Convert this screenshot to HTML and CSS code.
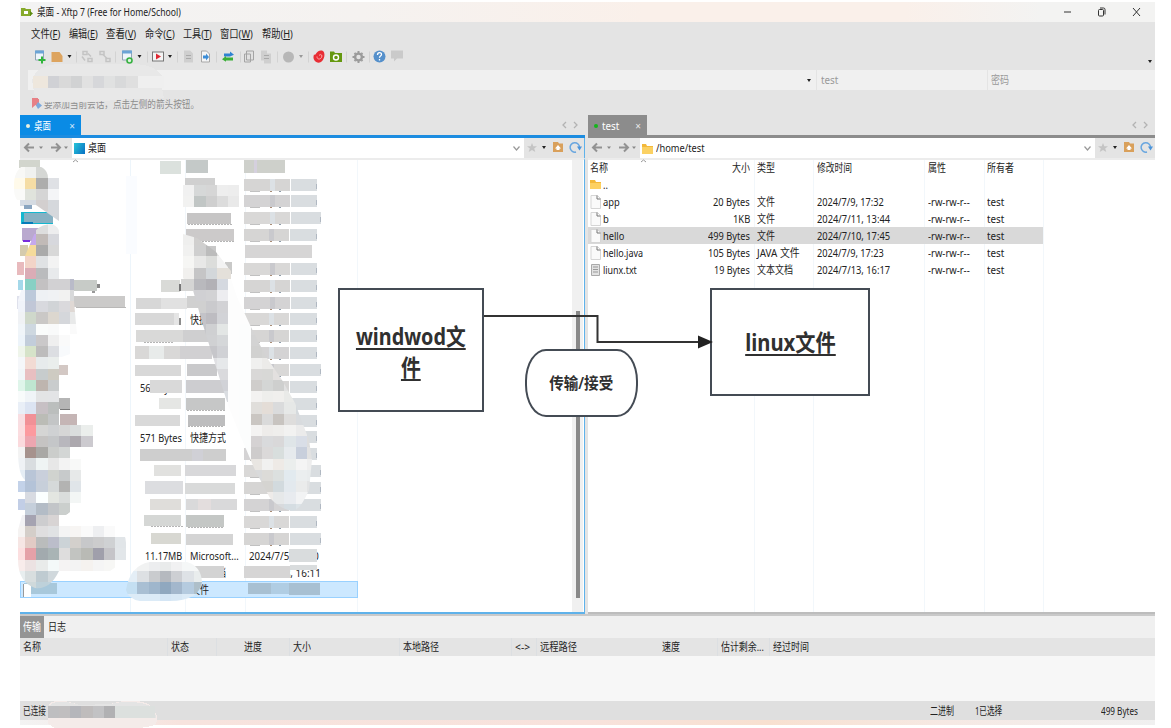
FILE: index.html
```html
<!DOCTYPE html>
<html lang="zh-CN">
<head>
<meta charset="utf-8">
<title>桌面 - Xftp 7</title>
<link rel="stylesheet" href="styles.css">
</head>
<body>
<main class="window">
  <header class="title">
    <svg class="logo" width="12" height="10" viewBox="0 0 12 10"><path fill="#86aa2c" d="M0 1h4l1 1h5v7H0z"/><path fill="#fff" d="M3 4h4v3H3z"/><path fill="#5b8a10" d="M9 4l3 2.500-3 2.500z"/></svg>
    <span class="fit" data-w="144">桌面 - Xftp 7 (Free for Home/School)</span>
    <span class="grow"></span>
    <svg width="80" height="14" viewBox="0 0 80 14" fill="none" stroke="#333" stroke-width="1"><path d="M1 7h7" /><rect x="35.500" y="4.500" width="5" height="6.500" rx="1"/><path d="M37 3h3.500q1.500 0 1.500 1.500v5"/><path d="M70 3l7 8M77 3l-7 8"/></svg>
  </header>
  <nav class="menu">
    <span class="fit" data-w="29">文件(<u>F</u>)</span><span class="fit" data-w="29">编辑(<u>E</u>)</span><span class="fit" data-w="30">查看(<u>V</u>)</span><span class="fit" data-w="30">命令(<u>C</u>)</span><span class="fit" data-w="29">工具(<u>T</u>)</span><span class="fit" data-w="33">窗口(<u>W</u>)</span><span class="fit" data-w="31">帮助(<u>H</u>)</span>
  </nav>
  <div class="toolbar">
    <svg width="400" height="24" viewBox="20 45.500 400 24">
      <g fill="#edf5fb" stroke="#90a4b5"><path d="M35.500 50.500h8v9h-8zM122.500 50.500h9v9h-9z"/></g>
      <path fill="#6ba4d6" d="M35 50h9v3h-9zM122 50h10v3h-10z"/>
      <path d="M42 56v7M38.500 59.500h7" stroke="#31b53c" stroke-width="2"/>
      <path fill="#dda45f" d="M51.500 51.500h8l3 4v6h-11z"/>
      <g fill="#222"><path d="M67.500 54.500h4l-2 3zM137.500 54.500h4l-2 3zM168 54.500h4l-2 3z"/></g><path fill="#999" d="M299 54.500h4l-2 3z"/>
      <path d="M76.500 51v11M115.500 51v11M147.500 51v11M177.500 51v11M216.500 51v11M240.500 51v11M277.500 51v11M308.500 51v11M346.500 51v11M369.500 51v11" stroke="#d3d3d3"/>
      <g stroke="#c4c4c4" fill="none" stroke-width="1.500"><rect x="83" y="51" width="4" height="3"/><rect x="88" y="58" width="4" height="3"/><path d="M82 56l3 4M88 53l3 3"/><rect x="100" y="51" width="4" height="3"/><rect x="106" y="58" width="4" height="3"/><path d="M103 54l4 4"/></g>
      <circle cx="129.500" cy="60" r="2.500" fill="#dff3df" stroke="#37b142" stroke-width="1.600"/>
      <rect x="152.500" y="51.500" width="11" height="9" fill="#f4f4f4" stroke="#777"/><path fill="#df2832" d="M156 53l5 3-5 3z"/>
      <path fill="#cfcfcf" d="M184 50h6l3 3v9h-9zM261 50h6v3h4v10h-7v-3h-3z"/><path stroke="#aaa" d="M186 55h5M186 58h5M264 55h5M264 58h5"/>
      <path fill="#f5f5f5" stroke="#a7a7a7" d="M201.500 50.500h5l3 3v8h-8z"/><path fill="#3c8dd7" d="M203 55h3v-2l3 3.500-3 3.500v-2h-3z"/>
      <path fill="#2f83d1" d="M224 53h6v-2l4 3.200-4 1.800h-6z"/><path fill="#3baf37" d="M233 57h-7v-1.500l-4 3.200 4 2.500V60h7z"/>
      <path fill="#e1e1e1" stroke="#a4a4a4" d="M246.500 50.500h7v9h-7zM244.500 53.500h6v8h-6z"/>
      <circle cx="288.500" cy="56.500" r="5.500" fill="#b7b7b7"/>
      <path fill="#e82e35" d="M314 54c2 2 2-5 8-4 4 1 3 10-2 12-4 1-8-3-6-8z"/><path d="M317 56c0 4 5 3 5-1q-2-2-3 0" fill="none" stroke="#ffaaaa"/>
      <path fill="#65980f" d="M330 51h4l1 1.500h7v9h-12z"/><circle cx="336" cy="57" r="2.500" fill="#65980f" stroke="#fff" stroke-width="1.400"/>
      <circle cx="358.500" cy="56.500" r="3.400" fill="none" stroke="#9b9b9b" stroke-width="2.400"/><path d="M358.500 50.500v2M358.500 60.500v2M352.500 56.500h2M362.500 56.500h2M354.500 52.500l1 1M361.500 59.500l1 1M354.500 60.500l1-1M361.500 53.500l1-1" stroke="#9b9b9b" stroke-width="2"/>
      <circle cx="379.500" cy="56" r="6" fill="#5590cb"/><path d="M377.500 54.500c0-3 4-3 4-.5 0 1.500-2 1.500-2 3.200M379.500 58.500v1.500" stroke="#fff" fill="none" stroke-width="1.300"/>
      <path fill="#cacaca" d="M391 50h12v8h-6l-3 3v-3h-3z"/>
    </svg>
    <span class="grow"></span><i class="caret"></i>
  </div>
  <div class="address"><div class="host"><i class="caret"></i></div><div class="user"><span class="fit" data-w="17">test</span></div><div class="pass"><span class="fit" data-w="18">密码</span></div></div>
  <div class="hint"><svg width="11" height="11" viewBox="0 0 11 11"><path fill="#e78086" d="M1 0h7v10L4.500 7 1 10z"/><path fill="#7da9dc" d="M7 4l4 3.500-4 3.500-2-3.500z"/></svg><span class="fit" data-w="155">要添加当前会话，点击左侧的箭头按钮。</span></div>

  <section class="panes">
    <div class="pane left">
      <div class="tabs"><div class="tab"><i class="dot"></i><span class="fit" data-w="17">桌面</span><b>×</b></div><svg class="pager" width="16" height="8" viewBox="0 0 16 8"><path d="M4 1L1 4l3 3M12 1l3 3-3 3" /></svg></div>
      <div class="path">
        <svg class="arrows" width="52" height="19" viewBox="0 0 52 19"><path d="M14 9.500H5M9 5.500l-4 4 4 4M31 9.500h9M36 5.500l4 4-4 4"/><path class="tri" d="M19 8.500h4l-2 2.500zM44 8.500h4l-2 2.500z"/></svg>
        <div class="field"><i class="desk"></i><span class="fit" data-w="18">桌面</span><svg class="chev" width="7" height="5" viewBox="0 0 7 5"><path d="M.5.5l3 3.500 3-3.500"/></svg></div>
        <svg class="acts" width="60" height="19" viewBox="0 0 60 19"><path fill="#c4c4c4" d="M8 5l1.300 3.200H13l-2.800 2.200L11.300 14 8 11.900 4.700 14l1.100-3.600L3 8.200h3.700z"/><path fill="#222" d="M18 8h4l-2 3z"/><path fill="#d9a05b" d="M29 4h5l1 1.500h4V14H29z"/><path fill="#fff" d="M34 7l3 3.500h-1.500V12h-3v-1.500H31z"/><path d="M55.500 9.500a4.700 4.700 0 1 0-3.500 4.500" stroke="#69a6df" fill="none" stroke-width="1.500"/><path fill="#4a93da" d="M53 8.500h5l-2.500 4z"/></svg>
      </div>
      <div class="list left-list" id="left"></div>
    </div>
    <div class="pane right">
      <div class="tabs"><div class="tab"><i class="dot"></i><span class="fit" data-w="17">test</span><b>×</b></div><svg class="pager" width="16" height="8" viewBox="0 0 16 8"><path d="M4 1L1 4l3 3M12 1l3 3-3 3" /></svg></div>
      <div class="path">
        <svg class="arrows" width="52" height="19" viewBox="0 0 52 19"><path d="M14 9.500H5M9 5.500l-4 4 4 4M31 9.500h9M36 5.500l4 4-4 4"/><path class="tri" d="M19 8.500h4l-2 2.500zM44 8.500h4l-2 2.500z"/></svg>
        <div class="field"><svg width="11" height="11" viewBox="0 0 11 11"><path fill="#f3b93b" d="M0 1h4l1 2h6v8H0z"/><path fill="#fbd163" d="M0 4h11v7H0z"/></svg><span class="fit" data-w="49">/home/test</span><svg class="chev" width="7" height="5" viewBox="0 0 7 5"><path d="M.5.5l3 3.500 3-3.500"/></svg></div>
        <svg class="acts" width="60" height="19" viewBox="0 0 60 19"><path fill="#c4c4c4" d="M8 5l1.300 3.200H13l-2.800 2.200L11.300 14 8 11.900 4.700 14l1.100-3.600L3 8.200h3.700z"/><path fill="#222" d="M18 8h4l-2 3z"/><path fill="#d9a05b" d="M29 4h5l1 1.500h4V14H29z"/><path fill="#fff" d="M34 7l3 3.500h-1.500V12h-3v-1.500H31z"/><path d="M55.500 9.500a4.700 4.700 0 1 0-3.500 4.500" stroke="#69a6df" fill="none" stroke-width="1.500"/><path fill="#4a93da" d="M53 8.500h5l-2.500 4z"/></svg>
      </div>
      <div class="list right-list" id="right"></div>
    </div>
  </section>

  <div class="logtabs"><div class="on"><span class="fit" data-w="18">传输</span></div><span class="fit" data-w="18">日志</span></div>
  <div class="loghead">
    <div><span class="fit" data-w="18">名称</span></div><div><span class="fit" data-w="18">状态</span></div><div class="end"><span class="fit" data-w="18">进度</span></div><div><span class="fit" data-w="18">大小</span></div><div><span class="fit" data-w="36">本地路径</span></div><div><span class="fit" data-w="15">&lt;-&gt;</span></div><div><span class="fit" data-w="37">远程路径</span></div><div><span class="fit" data-w="18">速度</span></div><div><span class="fit" data-w="43">估计剩余...</span></div><div><span class="fit" data-w="36">经过时间</span></div>
  </div>
  <div class="logbody"></div>
  <footer class="status"><span class="fit" data-w="23">已连接</span><span class="grow"></span><div class="mode"><span class="fit" data-w="24">二进制</span></div><div class="sel"><span class="fit" data-w="27">1已选择</span></div><span class="fit" data-w="37">499 Bytes</span></footer>
  <div class="strip"></div>
</main>

<svg class="overlay" id="mosaic" width="1171" height="728" viewBox="0 0 1171 728" aria-hidden="true">
  <defs>
    <clipPath id="c-names"><path d="M14 183Q15 167 28 164Q48 165 48 178H59V221L36 205H25Q14 202 14 189ZM36 230Q42 224 52 224Q59 227 59 232V279H74V301L76 324L77 334H70V354L59 358V414H81V425H93V448H70V459H81V504L66 515H59V526H115Q126 532 126 543V560L110 571H59Q50 590 35 588Q18 582 18 560V530L25 504V480Q18 475 18 450V300L25 279V256Z"/></clipPath>
    <clipPath id="c-swoosh"><path d="M183 234L197 238 216 252 231 271V279L237 297 250 325 265 355 282 380 295 403 309 440 312 460 309 490Q300 511 292 511Q280 509 270 498L255 470 240 435 228 405 217 370 203 325 192 287 183 278Z"/></clipPath>
    <clipPath id="c-foot"><path d="M126 590Q130 565 150 562H187Q201 566 202 582Q199 601 170 601H140Q128 599 126 590Z"/></clipPath>
  </defs>
</svg>

<div class="shape box-a"><span><u>windwod文<br>件</u></span></div>
<div class="shape box-b"><span><u>linux文件</u></span></div>
<svg class="overlay" width="1171" height="728" viewBox="0 0 1171 728"><path d="M484 316H597.500V342H700" fill="none" stroke="#333" stroke-width="2"/><path d="M698 335.500L713 342l-15 6.500z" fill="#222"/><path d="M73 162l2.500-2 2.500 2M641 162l2.500-2 2.500 2" fill="none" stroke="#999"/></svg>
<div class="shape pill"><span>传输/接受</span></div>
<script src="app.js"></script>
</body>
</html>
```
FILE: styles.css
```css
* { box-sizing: border-box; }
body { margin: 0; width: 1171px; height: 728px; overflow: hidden; position: relative; background: #fff; color: #222; font: 11px/14px "Noto Sans", "Noto Sans CJK SC", sans-serif; }
svg { display: block; flex: none; }
.fit { display: inline-block; flex: none; white-space: nowrap; transform-origin: 0 50%; }
.grow { flex: 1; }
.caret { border: 2px solid transparent; border-top: 3px solid #222; border-bottom: 0; }

.window { display: flex; flex-direction: column; width: 1135px; height: 728px; margin-left: 20px; padding-top: 2px; }
.title { display: flex; align-items: center; height: 20px; padding-right: 12px; background: linear-gradient(90deg, #f3f3f3 0, #f5f2f0 30%, #faf0ea 55%, #faf0ea 78%, #f3f3f2 90%); font-size: 11px; }
.logo { margin: 0 4px 0 1px; }
.menu { display: flex; gap: 8.5px; align-items: center; height: 23px; padding-left: 11px; background: #e4e4e4; }
.menu u { text-underline-offset: 1px; }
.toolbar { display: flex; align-items: center; height: 25px; padding-right: 3px; background: #e4e4e4; }
.toolbar .caret { margin-top: 8px; }
.address { display: flex; height: 20px; padding-left: 8px; background: #e4e4e4; color: #999; }
.address > div { display: flex; align-items: center; background: #f0f0f0; }
.host { width: 788px; justify-content: flex-end; padding-right: 5px; }
.user { width: 171px; padding-left: 4px; border-left: 1px solid #e4e4e4; }
.pass { flex: 1; padding-left: 3px; border-left: 1px solid #e4e4e4; }
.hint { display: flex; align-items: center; height: 25px; padding: 2px 0 0 11px; gap: 2px; background: #e4e4e4; color: #8d8d8d; font-size: 10.5px; }

.panes { display: flex; height: 499px; background: #e4e4e4; gap: 3px; }
.pane { display: flex; flex-direction: column; }
.left { width: 565px; --accent: #1c8ce0; --edge: #5fb2ea; }
.right { flex: 1; --accent: #8c8c8c; --edge: #bdbdbd; }
.tabs { display: flex; height: 23px; justify-content: space-between; align-items: center; border-bottom: 3px solid var(--accent); padding-right: 7px; }
.tab { display: flex; align-items: center; height: 20px; width: 61px; padding: 2px 6px 0 6px; background: #0a8be5; color: #fff; }
.right .tab { width: 59px; background: #8c8c8c; }
.tab b { margin-left: auto; font: 10px "Noto Sans"; opacity: .8; }
.dot { width: 4px; height: 4px; margin-right: 4px; border-radius: 50%; background: #e9f0e0; }
.right .dot { background: #14b61a; }
.pager { fill: none; stroke: #b3b3b3; stroke-width: 1.3; }
.path { display: flex; height: 20px; border-right: 1px solid var(--edge); }
.right .path, .right .list { border-right: 0; }
.arrows { fill: none; stroke: #929292; stroke-width: 2; }
.arrows .tri { fill: #888; stroke: none; }
.field { flex: 1; display: flex; align-items: center; padding: 0 4px 0 2px; gap: 3px; background: #fff; }
.desk { width: 11px; height: 11px; background: linear-gradient(120deg, #27c5d8, #0870c4); }
.chev { margin-left: auto; fill: none; stroke: #999; stroke-width: 1.2; }
.list { flex: 1; position: relative; background: #fff; border-top: 2px solid #ececec; border-bottom: 2px solid var(--edge); border-right: 1px solid var(--edge); overflow: hidden; }
.left-list { background: linear-gradient(#edf5fb, #edf5fb) 110px 0/1px 100% no-repeat, linear-gradient(#f2f7fb, #f2f7fb) 165px 0/1px 100% no-repeat, linear-gradient(#f2f7fb, #f2f7fb) 225px 0/1px 100% no-repeat, linear-gradient(#f2f7fb, #f2f7fb) 337px 0/1px 100% no-repeat, linear-gradient(#f0f0f0, #f0f0f0) 552px 0/11px 100% no-repeat, #fff; }
.left-list::after { content: ""; position: absolute; left: 556px; top: 151px; width: 4px; height: 287px; background: #898989; }
.right-list { background: linear-gradient(#f2f7fb, #f2f7fb) 166px 0/1px 100% no-repeat, linear-gradient(#f2f7fb, #f2f7fb) 225px 0/1px 100% no-repeat, linear-gradient(#f2f7fb, #f2f7fb) 336px 0/1px 100% no-repeat, linear-gradient(#f2f7fb, #f2f7fb) 396px 0/1px 100% no-repeat, linear-gradient(#f2f7fb, #f2f7fb) 455px 0/1px 100% no-repeat, #fff; }
.row { display: grid; height: 16.86px; align-items: center; }
.row > div { display: flex; align-items: center; }
.row .num { justify-content: flex-end; }
.right-list .row { grid-template-columns: 162px 7px 60px 111px 59px 56px; width: 455px; }
.right-list .row > div:first-child { padding-left: 2px; gap: 2px; }
.left-list .row { grid-template-columns: 162px 8px 59px 108px; width: 338px; }
.right-list .selected { background: #d9d9d9; }
.left-list .selected { background: #cce8ff; border: 1px solid #99d1ff; }

.logtabs { display: flex; align-items: center; gap: 4px; height: 24px; border-top: 2px solid #c9c9c9; background: #f0f0f0; }
.logtabs .on { display: flex; align-items: center; height: 22px; padding: 0 3px; background: #949494; color: #fff; }
.loghead { display: grid; grid-template-columns: 147px 49px 73px 110px 112px 25px 123px 58px 52px 1fr; height: 18px; background: #e4e4e4; }
.loghead > div { display: flex; align-items: center; padding-left: 3px; border-left: 1px solid #dcdfe2; }
.loghead > div:nth-child(1), .loghead > div:nth-child(8) { border-left: 0; }
.loghead > .end { padding-left: 27px; }
.logbody { height: 45px; background: #f7f7f7; }
.status { display: flex; align-items: center; height: 19px; padding: 0 17px 0 3px; background: #dfdfdf; }
.mode { width: 45px; }
.sel { width: 126px; }
.strip { height: 5px; background: linear-gradient(90deg, #f3f3f3, #f7e3de 14%, #f8e2dc 50%, #f8e0d0 66%, #f6e9e4 82%, #f0f0f0); }

.overlay { position: absolute; left: 0; top: 0; }
.shape { position: absolute; display: flex; align-items: center; justify-content: center; text-align: center; border: 2px solid #444b54; background: #fff; color: #303030; font-weight: 700; }
.shape span { display: block; flex: none; white-space: nowrap; }
.shape u { text-decoration-thickness: 2px; text-underline-offset: 3px; }
.box-a { left: 338px; top: 288px; width: 146px; height: 124px; font-size: 23px; line-height: 31px; }
.box-a span { transform: translateY(2px) scaleX(.86); }
.box-b { left: 710px; top: 288px; width: 160px; height: 108px; font-size: 23px; line-height: 31px; }
.box-b span { transform: scaleX(.88); }
.pill { left: 525px; top: 349px; width: 113px; height: 68px; border-radius: 21px / 32px; font-size: 16px; font-weight: 600; }
.pill span { transform: scaleX(.91); }
```
FILE: app.js
```js
const text = (value, width) => value ? `<span class="fit" data-w="${width}">${value}</span>` : '';

// Remote directory
const page = '<svg width="11" height="14" viewBox="0 0 11 14"><path d="M1 .5h6.500l3 3v10H1z" fill="#fafafa" stroke="#d5d5d5"/><path d="M7 .5v3.500h3.500" fill="none" stroke="#777"/></svg>';
const doc = '<svg width="11" height="14" viewBox="0 0 11 14"><path d="M1.500 1.500h8v11h-8z" fill="#e2e2e2" stroke="#aaa"/><path d="M3 4h5M3 6.500h5M3 9h5" stroke="#999"/></svg>';
const folder = '<svg width="11" height="10" viewBox="0 0 11 10"><path d="M0 0h5l1 2h5v7H0z" fill="#f3b93b"/><path d="M0 3h11v6H0z" fill="#fdd162"/></svg>';
const remote = [
  ['', '名称', 18, '大小', 18, '类型', 18, '修改时间', 35, '属性', 18, '所有者', 27],
  [folder, '..', 5],
  [page, 'app', 17, '20 Bytes', 37, '文件', 18, '2024/7/9, 17:32', 67, '-rw-rw-r--', 42, 'test', 17],
  [page, 'b', 6, '1KB', 17, '文件', 18, '2024/7/11, 13:44', 73, '-rw-rw-r--', 42, 'test', 17],
  [page, 'hello', 21, '499 Bytes', 42, '文件', 18, '2024/7/10, 17:45', 73, '-rw-rw-r--', 42, 'test', 17],
  [page, 'hello.java', 40, '105 Bytes', 42, 'JAVA 文件', 43, '2024/7/9, 17:23', 67, '-rw-rw-r--', 42, 'test', 17],
  [doc, 'liunx.txt', 34, '19 Bytes', 36, '文本文档', 36, '2024/7/13, 16:17', 73, '-rw-rw-r--', 42, 'test', 17]
];
document.getElementById('right').innerHTML = remote.map((r, i) => {
  const cells = [0, 1, 2, 3].map(c => `<div>${text(r[5 + c * 2], r[6 + c * 2])}</div>`).join('');
  return `<div class="row${i === 4 ? ' selected' : ''}"><div>${r[0]}${text(r[1], r[2])}<span class="grow"></span>${text(r[3], r[4])}</div><div></div>${cells}</div>`;
}).join('');

// Local directory
const local = {
  9: ['', 0, '快捷方式', 36, '', 0],
  13: ['566 Bytes', 42, '', 0, '', 0],
  16: ['571 Bytes', 42, '快捷方式', 36, '', 0],
  23: ['11.17MB', 37, 'Microsoft...', 49, '2024/7/5, 15:20', 70],
  24: ['', 0, '文本文档', 36, '2024/7/8, 16:11', 72],
  25: ['', 0, '文件', 18, '', 0]
};
document.getElementById('left').innerHTML = Array.from({ length: 26 }, (_, i) => {
  const r = local[i] || ['', 0, '', 0, '', 0];
  return `<div class="row${i === 25 ? ' selected' : ''}"><div class="num">${text(r[0], r[1])}</div><div></div><div>${text(r[2], r[3])}</div><div>${text(r[4], r[5])}</div></div>`;
}).join('');

// Squeeze each label to its column width
document.querySelectorAll('.fit').forEach(el => {
  const natural = el.offsetWidth, width = +el.dataset.w;
  el.style.transform = `scaleX(${width / natural})`;
  el.style.marginRight = `${width - natural}px`;
});

// Redaction blocks
const svg = document.getElementById('mosaic');
const group = clip => {
  const g = document.createElementNS('http://www.w3.org/2000/svg', 'g');
  g.setAttribute('shape-rendering', 'crispEdges');
  if (clip) g.setAttribute('clip-path', `url(#${clip})`);
  svg.append(g);
  return g;
};
const draw = (g, items) => { g.innerHTML += items.map(([x, y, w, h, c]) => `<rect x="${x}" y="${y}" width="${w}" height="${h}" fill="#${c}"/>`).join(''); };
const tiles = (g, x0, y0, rows) => rows.forEach((line, r) => {
  const y = Math.round(y0 + r * 11.23), h = Math.round(y0 + (r + 1) * 11.23) - y;
  draw(g, line.split(' ').map((c, i) => {
    const x = Math.round(x0 + i * 11.27);
    return c === '-' ? null : [x, y, Math.round(x0 + (i + 1) * 11.27) - x, h, c];
  }).filter(Boolean));
});

const bars = group();
draw(bars, [
  [19, 160, 21, 8, 'd2d5cd'], [20, 200, 12, 6, 'd5dce5'], [24, 205, 8, 4, '8ba6c1'],
  [21, 212, 32, 12, '14b7cf'], [24, 213, 29, 10, '86b0c2'], [22, 222, 11, 2, '087bb9'],
  [22, 228, 18, 13, 'baa9cf'], [23, 240, 7, 2, '792bdc'], [20, 245, 8, 11, 'd5cbae'],
  [17, 262, 7, 13, 'e8babd'], [18, 280, 5, 10, 'a4d8e9'], [17, 296, 5, 13, 'dfe1ec'],
  [72, 280, 25, 11, 'c7cbc7'], [97, 284, 3, 4, '888888'], [92, 291, 3, 2, '999999'], [74, 296, 51, 11, 'cbcac9'], [76, 307, 50, 1, 'b9b8b7'],
  [59, 365, 9, 10, 'd3c8c4'], [59, 398, 11, 11, 'b5b5b5'], [60, 409, 10, 1, '777777'], [60, 414, 17, 12, 'c5b5b5'],
  [18, 481, 14, 11, 'c3d2e9'], [18, 499, 7, 11, 'c2cee6'], [59, 506, 9, 8, 'd0d3d1'],
  [160, 161, 21, 13, 'dbe1dd'], [186, 160, 22, 13, 'c4c9c8'], [185, 178, 30, 9, 'd0d0d0'],
  [126, 176, 11, 78, 'fafcff'],
  [187, 213, 44, 11, 'c6c5c5'], [186, 229, 48, 12, 'cccaca'], [205, 246, 11, 12, 'c8c8c8'], [225, 262, 7, 12, 'c9c9c8'],
  [161, 280, 19, 12, 'd9dad7'], [181, 279, 16, 12, 'd5d5d4'], [179, 284, 2, 7, '777777'],
  [136, 298, 25, 11, 'd7d7d7'], [161, 298, 26, 11, 'e1e1e1'], [187, 296, 14, 12, 'd0d0d0'],
  [135, 313, 39, 12, 'd8d8d8'], [174, 313, 5, 12, 'e5e5e5'], [179, 318, 2, 7, '8d8d8d'],
  [136, 330, 49, 12, 'd9d9d8'], [183, 330, 31, 12, 'cfcfd0'],
  [135, 346, 45, 13, 'd9d8d7'], [149, 346, 15, 13, 'e8ebea'], [180, 346, 32, 13, 'd1d0d2'],
  [135, 365, 46, 11, 'd8d8d8'], [187, 364, 30, 12, 'c9c9cb'],
  [150, 380, 32, 13, 'd9d9d9'], [186, 380, 42, 13, 'cdcdd0'],
  [159, 398, 22, 11, 'e5e6e4'], [186, 398, 39, 12, 'c6c7c7'], [135, 415, 45, 11, 'd9d9d9'], [188, 415, 37, 11, 'bdbdbe'],
  [140, 449, 86, 12, 'cecece'], [192, 449, 11, 12, 'd0d0d6'],
  [154, 465, 27, 11, 'e1e1df'], [185, 465, 51, 11, 'd8d8da'], [145, 481, 38, 13, 'dcdde0'], [185, 483, 50, 11, 'd9dada'],
  [150, 499, 31, 11, 'dfddda'], [186, 499, 51, 11, 'd9d9da'], [198, 499, 13, 11, 'e3dddd'],
  [144, 515, 37, 11, 'd5d7d5'], [186, 515, 38, 12, 'c4c7c5'], [151, 533, 30, 11, 'd8d8d2'], [186, 534, 47, 11, 'd4d4d4'],
  [186, 566, 38, 12, 'd3d3d3'],
  [24, 583, 33, 11, 'a8c8db'], [23, 584, 8, 13, 'ffffff'], [23, 584, 1, 13, '999999']
]);
// remnants of covered text lines
[[151, 526, 31], [188, 527, 35], [188, 224, 43], [187, 241, 46], [187, 410, 37], [188, 426, 36], [144, 342, 28]].forEach(([x, y, w]) => {
  for (let i = 0; i < w; i += 3) draw(bars, [[x + i, y, 2, 1, 'b5b5b5']]);
});

// date column
const dates = Array.from({ length: 25 }, (_, i) => {
  const y = Math.round(178.500 + i * 16.86);
  const cut = i === 3 || i > 7 ? 289 : 290;
  const shade = ['d6d5d4', 'd4d3d4', 'd9d8d7'][i % 3];
  if (i === 4) return [[245, 245, 67, 13, 'd6d5d5']];
  if (i === 22) return [[289, 549, 28, 13, 'd9dcdd']];
  if (i === 23) return [[244, 566, 46, 12, 'd6d5d5'], [290, 565, 27, 5, 'd9dcdd']];
  if (i === 24) return [[248, 583, 23, 11, 'a8c0d2'], [271, 583, 18, 11, 'b0cde3'], [289, 583, 31, 12, 'a8c0d2']];
  const wide = [2, 11, 17, 18, 19, 21].includes(i) ? 320 : 316;
  return [[244, y, cut - 244, 12, shade], [cut + 1, y, wide - cut, 12, 'd9dde0'], [cut - 20, y, 5, 12, i % 2 ? 'c9c9cd' : 'dce1e5'],
    [wide, y + 5, 1, 5, 'b0b8c2'], [270, y + 12, 2, 1, 'a98d76'], [279, y + 12, 2, 1, '8d9ba8'], [250, y + 12, 10, 1, 'c1c1c1']];
}).flat();
draw(bars, [[244, 160, 41, 13, 'ced0cb'], [254, 160, 3, 13, 'd5d0de'], ...dates]);
tiles(bars, 183, 185, ['f1f1f1 d6d8d8 d6d6d6 eeeeee ededed', 'f2f2f1 c1c6c5 cfcfcf dcdcdc e9e9e9']);

tiles(group('c-names'), 13.700, 166.500, [
  'f8f8f6 f0f1ef d5d7d4 e8eae8', 'fffaea f5dda5 adadac dfe1e5', 'fafaf8 e0e3dc d5d5d5 f4f5f7', '- d5dbe2 d3cfcf d5d8dc', '- - d5d8dc d5d8dc', '- - dddddd ededee',
  '- c5a9ec c1bab7 d7d8dd', '- f5db9b aaaaaa d8d8d8', '- f2d4c8 e0e2e4 f3f3f3', '- dbacb6 babbbd e8eaec', '- 88d0c4 c3c1c2 d2d1d3 d2d1d3 b9bbc9',
  'f3f5fb bcc9da eef1f4 f0f2f4 f2f2f1 d8d9da', 'f0f3fa c1c7d7 d8d9de d1d4d7 dad9dc dfd8d4', 'f0f2f5 cfd8cb cac8c6 dcd7cf d5d7db e8e9e9', 'f0f5f9 ced8e0 fafcfb f9fafa ffffff fafafa',
  'edf4fa c2cdda cac8c9 efefef fafafa', 'eff5eb d6e3c9 bdbcbc dcdee2 f8fafc', 'f5f7fa f2dbd4 e7ebec eaeeec', 'f1f6f9 e8bfc1 c7cccd cecbc2', 'dff5ea bfe6d0 beb5af c9cccd', 'f8fbfb f0f4f7 e3e4e5 e3e4e6',
  'e9eff7 dce4f2 c7c0c4 bbbebd', 'f8dee2 f19197 bbbcb6 c3c5c6', 'fbdde0 fc9a9f d5d5d4 cfd1d3 d6d6d6 dadddd ebeeec', 'fbdadd eda6b0 c5c3c2 c4c6c8 b8b7bd aca8ae cccacf', 'f3f3f3 a6928d a9a8a5 cbcdcb d3d6d5',
  'eff2f5 d9dde0 eff4f4 e7e7e7 f3f3f3 f8f9f8', 'e5edf5 b9c5d7 c9cfdb d0d3cf c7cacb e7e9e9', '- b4c3d8 c7cfda d5d9d9 b3b3b2 e0e5e9', '- d8dbe2 fbffff e3e6e1 dadddc f3f6f5', '- c5cfdb b3bcc6 c2c5c8 cbcfcd', 'f2f2f5 a5a3b1 cdcdcf d8d4d4',
  'f5f3f2 d4cec9 dfdedf e0e2e4 f4f4f4 f7f5f3 fafafa eeeff1 fafafa', 'f6e6e4 e2cbc5 babcbc bbbdca ccd3d7 d3d0cc c7c8ca cccccd cfd1d3 e1e5e8', 'fcdfe0 e5a1a8 a2aaae a9b4b5 dedddd c2c4c1 b9bab5 a09fab c5c4c8 e2e6e9', 'f8eceb ece2e2 e9ebea f4f9f9 f5f3f3 f3f3f3 f5f2ef f5f5f5 f7f7f5', 'e8eeef d8dedf bfcbd1 d0d8dc', 'dfe8ea cfd9db bed1da c1d3dc'
]);

tiles(group('c-swoosh'), 183, 234, [
  'efefee d0cfce c8c8c8 c8c8c8', 'f1f1f0 cfcfcf bcbcbc e0e0df', 'f6f6f4 e8e8e7 dcdddb f3f3f3', 'f1f0ee c5c5c6 d3d7da e4e0da e4e0da', 'd5d5d4 b9b9bd b2b1b6 d5d9e0 fdfdfd', 'd6d6d7 d0d0d3 d2d2d4 ededf0 fdfdfd fdfdfd',
  '- d0d0d0 cacacd d2d2d5 fdfdfd fdfdfd', '- c3c3c8 bdbcc1 d2d3d7 fdfdfd fdfdfd d6d6d5', '- c5c6ca cfd0d2 e3e6e5 fdfdfd fcfdfd d5d5d5', '- - d0d1d3 d5d7d9 fdfdfd fcfdfd d3d3d3 d5d5d5', '- - c6c6ca d0d1d5 fdfdfd fcfdfd d1d1d0 d3d3d2',
  '- - e0e0e3 e6e8ea fdfdfd fcfdfd f0f0ef ecebe9 e8e8e6', '- - - dadadd fdfdfd fcfdfd d9d8d7 d8d8d6 e3e0df', '- - - d1d2d7 fdfdfd fcfdfd cfcdcb d4d6d5 cecfce e1e1e1', '- - - dadde1 fdfdfd fcfdfd f3f2f1 eeeeec f0efed e9eae8', '- - - - fdfdfd fcfdfd e0dedb e4ddd7 dadbdc e6e8e7 d5dadd',
  '- - - - fdfdfd fcfdfd cac6c2 dadada c8c4c0 dedddc d8dbde', '- - - - fdfdfd fcfdfd f4f3f2 eeecea efeeec f2f2f1 ebebeb', '- - - - - fcfdfd d5d2d3 d9dadc d9d8d9 dfe5e8 d9dee7 dddddd', '- - - - - fcfdfd cecccc dbd9d9 d8dedd e6eaed c8cfdc e2e2e2', '- - - - - e9e6e2 e9e6e2 f1f1f0 eeeae6 ebeeed f4f4f4 eeeeee',
  '- - - - - - d9dadb dcdbd8 dce0df e2eaef ebeeef e9eced', '- - - - - - d5d5d3 d5d4d1 d2dade e3e9ee eaebeb e2e3e4', '- - - - - - ededeb eeebe9 e6e8e9 e8ebef f2f3f4 f0f0f0', '- - - - - - - dddddd d8dadd d5dde2 dce3e7 e6e6e6'
]);
tiles(group('c-foot'), 126, 560, ['f3f5f6 f1f2f2 ecedef e9ebeb f1f1f2 f5f7f7 f5f7f7', 'e4eef6 dde0e3 c9cbce b5b9bf cdcfd3 dee2e6 e9eded', 'c4dff2 a9bfd3 9fb6cc 90a8bf a3b7cc b5cbdf aebfc9', 'dcebf7 dcebf7 dcebf7 d5e6f5 d8e8f5 dcebf7 dcebf7']);

// Session name, hint text and status bar
const soft = group();
soft.innerHTML = '<path d="M32 80Q36 65 60 64H135Q155 65 162 76V88L164 98Q150 100 130 99L90 102H50Q36 102 34 92Z" fill="#e8e8e8"/><path d="M48 724V708Q50 695 80 705L110 704Q135 697 150 705Q160 715 156 724Q150 728 134 728H55Z" fill="#f4ebe9"/><path d="M48 718V708Q52 697 80 705L110 704Q135 699 150 706Q156 712 156 718Z" fill="#e4e4e4"/>';
draw(soft, [[33, 76, 15, 12, 'eee7dd'], [48, 76, 11, 12, 'd0d1d5'], [59, 76, 12, 12, 'd9d9d9'], [71, 76, 11, 12, 'd1d2d3'], [82, 76, 11, 12, 'e1e1e1'], [93, 76, 11, 12, 'd6d7da'], [104, 76, 11, 12, 'e0e1e1'], [115, 76, 11, 12, 'd8d9da'], [126, 76, 12, 12, 'dfdfdf'], [138, 76, 26, 12, 'efefef'],
  [48, 706, 11, 12, 'bebec0'], [59, 706, 11, 12, 'c0bebf'], [70, 706, 11, 12, 'b5b6bb'], [81, 706, 12, 12, 'bfbcbc'], [93, 706, 11, 12, 'c2c2c4'], [104, 706, 11, 12, 'b1b1b3'], [115, 706, 40, 12, 'dce0de']]);
```
